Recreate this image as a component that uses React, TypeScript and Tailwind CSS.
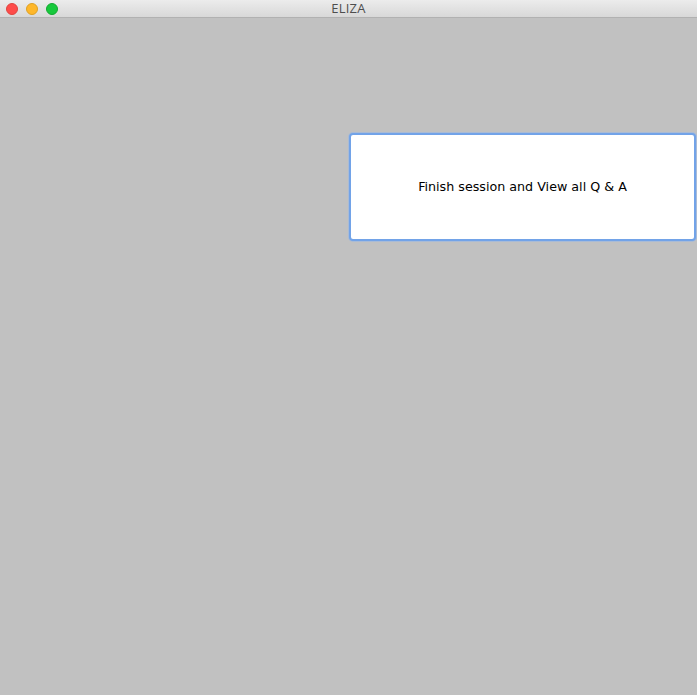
export default function App() {
  return (
    <div className="w-[697px] h-[695px] flex flex-col bg-[#c1c1c1] overflow-hidden" style={{ fontFamily: '"Open Sans", "Liberation Sans", sans-serif' }}>
      {/* Window title bar */}
      <div className="relative h-[18px] flex items-center border-b border-[#b1b1b1] bg-gradient-to-b from-[#ececec] to-[#d8d8d8]">
        <div className="flex items-center gap-[8px] pl-[6px]">
          <span className="w-[12px] h-[12px] rounded-full bg-[#fe4c4a] border border-[#e0443e]" />
          <span className="w-[12px] h-[12px] rounded-full bg-[#feb72a] border border-[#dea123]" />
          <span className="w-[12px] h-[12px] rounded-full bg-[#17c93c] border border-[#13a930]" />
        </div>
        <div className="absolute inset-0 flex items-center justify-center text-[13px] text-[#4d4d4d] tracking-[0.02em]">
          ELIZA
        </div>
      </div>

      {/* Content */}
      <div className="flex-1 flex justify-end items-start pt-[115px] pr-[1px]">
        <button
          className="w-[347px] h-[108px] flex items-center justify-center bg-white rounded-[4px] border-2 border-[#72a3e8] shadow-[0_0_0_1px_rgba(140,180,240,0.45)] text-[12.7px] text-black"
          style={{ fontFamily: '"DejaVu Sans", sans-serif' }}
        >
          Finish session and View all Q &amp; A
        </button>
      </div>
    </div>
  );
}
